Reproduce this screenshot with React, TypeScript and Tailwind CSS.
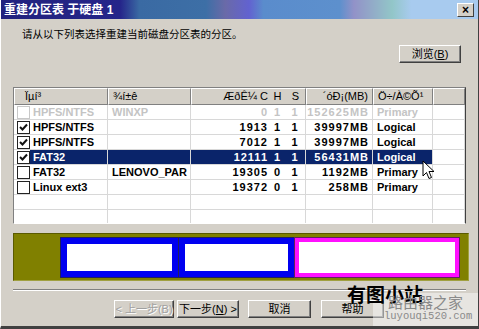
import React from 'react';

type Check = 'on' | 'off' | 'disabled';

interface Row {
  chk: Check;
  fs: string;
  label: string;
  c: string;
  h: string;
  s: string;
  size: string;
  type: string;
  dim?: boolean;
  sel?: boolean;
}

const rows: Row[] = [
  { chk: 'disabled', fs: 'HPFS/NTFS', label: 'WINXP', c: '0', h: '1', s: '1', size: '152625MB', type: 'Primary', dim: true },
  { chk: 'on', fs: 'HPFS/NTFS', label: '', c: '1913', h: '1', s: '1', size: '39997MB', type: 'Logical' },
  { chk: 'on', fs: 'HPFS/NTFS', label: '', c: '7012', h: '1', s: '1', size: '39997MB', type: 'Logical' },
  { chk: 'on', fs: 'FAT32', label: '', c: '12111', h: '1', s: '1', size: '56431MB', type: 'Logical', sel: true },
  { chk: 'off', fs: 'FAT32', label: 'LENOVO_PAR', c: '19305', h: '0', s: '1', size: '1192MB', type: 'Primary' },
  { chk: 'off', fs: 'Linux ext3', label: '', c: '19372', h: '0', s: '1', size: '258MB', type: 'Primary' },
];

const CheckBox = ({ state }: { state: Check }) => (
  <div
    className={`w-[13px] h-[13px] shrink-0 border flex items-center justify-center ${
      state === 'disabled' ? 'border-[#c8c8c8] bg-white' : 'border-[#222] bg-white'
    }`}
  >
    {state === 'on' && (
      <svg width="9" height="9" viewBox="0 0 9 9">
        <path d="M1 4 L3.5 6.5 L8 1.5" stroke="#111" strokeWidth="2" fill="none" />
      </svg>
    )}
  </div>
);

const Btn = ({ children, className = '', disabled = false }: { children: React.ReactNode; className?: string; disabled?: boolean }) => (
  <div
    className={`h-[18px] flex items-center justify-center bg-[#d4d0c8] border border-t-white border-l-white border-r-[#404040] border-b-[#404040] shadow-[inset_-1px_-1px_0_#808080] text-[11px] ${
      disabled ? 'text-[#a0a0a0] [text-shadow:1px_1px_0_#fff]' : 'text-black'
    } ${className}`}
  >
    {children}
  </div>
);

const headCell =
  'h-[17px] flex items-center bg-[#d4d0c8] border-t border-l border-t-white border-l-white border-r border-b border-r-[#808080] border-b-[#808080] text-[11px] text-black whitespace-nowrap overflow-hidden';

const cell = 'h-[15px] flex items-center border-r border-b border-[#d8d8d8] text-[11px] font-bold whitespace-nowrap overflow-hidden';

export default function App() {
  return (
    <div
      className="relative w-[479px] h-[329px] overflow-hidden bg-[#d4d0c8] border-l border-l-white border-r border-r-[#404040] border-b-[3px] border-b-[#404040]"
      style={{ fontFamily: '"Liberation Sans", "Noto Sans CJK SC", sans-serif' }}
    >
      {/* title bar */}
      <div className="h-[19px] flex items-center pl-[3px] bg-[linear-gradient(90deg,#22227e_0%,#25258a_25%,#3a6aa3_29%,#3d6fa6_43%,#6a6aa8_47%,#6262d0_52%,#5a8ccc_55%,#5d90cd_71%,#9292c8_74%,#92c6c8_82%,#a8cbef_86%,#a8cbef_100%)]">
        <span className="text-white text-[12px] font-bold leading-none">重建分区表 于硬盘 1</span>
        <div className="ml-auto mr-[4px] w-[17px] h-[14px] bg-[#d4d0c8] border border-t-white border-l-white border-r-[#404040] border-b-[#404040] flex items-center justify-center text-[12px] font-bold leading-none text-black">
          ×
        </div>
      </div>

      <div className="px-[12px]">
        <div className="mt-[8px] pl-[9px] h-[14px] text-[10.5px] leading-[14px] text-black">
          请从以下列表选择重建当前磁盘分区表的分区。
        </div>

        <div className="mt-[4px] flex justify-end">
          <Btn className="w-[62px] mr-[5px]">
            浏览(<span className="underline">B</span>)
          </Btn>
        </div>

        {/* partition list */}
        <div className="mt-[24px] h-[137px] bg-white border border-t-[#808080] border-l-[#808080] border-r-[#404040] border-b-white overflow-hidden">
          <div className="grid grid-cols-[94px_83px_115px_67px_60px_1fr]">
            <div className={`${headCell} pl-[10px]`}>Ïµí³</div>
            <div className={`${headCell} pl-[4px]`}>¾í±ê</div>
            <div className={headCell}>
              <span className="w-[76px] text-right">ÆðÊ¼ C</span>
              <span className="w-[19px] text-center">H</span>
              <span className="w-[17px] text-center">S</span>
            </div>
            <div className={`${headCell} justify-end pr-[4px]`}>´óÐ¡(MB)</div>
            <div className={`${headCell} pl-[4px]`}>Ö÷/À©Õ¹</div>
            <div className={headCell}></div>

            {rows.map((r, i) => {
              const color = r.sel ? 'text-white' : r.dim ? 'text-[#c4c4c4]' : 'text-black';
              const bg = r.sel ? 'bg-[#0a246a]' : '';
              return (
                <React.Fragment key={i}>
                  <div className={`${cell} pl-[3px] ${color}`}>
                    <CheckBox state={r.chk} />
                    <span className={`flex-1 h-full flex items-center pl-[3px] ${bg}`}>{r.fs}</span>
                  </div>
                  <div className={`${cell} pl-[4px] ${color} ${bg}`}>{r.label}</div>
                  <div className={`${cell} ${color} ${bg}`}>
                    <span className="w-[77px] text-right tracking-[1px]">{r.c}</span>
                    <span className="w-[18px] text-center">{r.h}</span>
                    <span className="w-[17px] text-center">{r.s}</span>
                  </div>
                  <div className={`${cell} justify-end pr-[3px] tracking-[1px] ${color} ${bg}`}>{r.size}</div>
                  <div className={`${cell} pl-[4px] ${color} ${bg}`}>{r.type}</div>
                  <div className={cell}></div>
                </React.Fragment>
              );
            })}
            {[0, 1].map((k) =>
              [0, 1, 2, 3, 4, 5].map((j) => <div key={`e${k}-${j}`} className={cell}></div>)
            )}
          </div>
        </div>

        {/* disk map */}
        <div className="mt-[9px] h-[48px] w-[456px] bg-[#808000] border border-t-[#5a5a00] border-l-[#5a5a00] border-r-[#a0a040] border-b-[#a0a040] flex items-start pt-[4px] pl-[47px]">
          <div className="w-[117px] h-[39px] border-[6px] border-[#0000f0] outline outline-1 outline-[#202060] bg-white"></div>
          <div className="ml-[1px] w-[115px] h-[39px] border-[6px] border-[#0000f0] outline outline-1 outline-[#202060] bg-white"></div>
          <div className="ml-[1px] w-[164px] h-[39px] border-[4px] border-[#ff10ff] outline outline-1 outline-[#602060] bg-white"></div>
        </div>

        <div className="mt-[8px] h-[2px] border-t border-t-[#808080] border-b border-b-white"></div>

        <div className="mt-[9px] flex">
          <Btn disabled className="ml-[101px] w-[60px]">
            &lt; 上一步(B)
          </Btn>
          <Btn className="ml-[3px] w-[62px]">
            下一步(<span className="underline">N</span>) &gt;
          </Btn>
          <Btn className="ml-[9px] w-[63px]">取消</Btn>
          <Btn className="ml-[10px] w-[63px]">帮助</Btn>
        </div>
      </div>

      {/* mouse pointer */}
      <svg className="absolute left-[421px] top-[160px]" width="13" height="20" viewBox="0 0 13 20">
        <path d="M1 1 L1 16 L4.5 12.5 L7 18.5 L9.5 17.5 L7 11.5 L12 11.5 Z" fill="#fff" stroke="#000" strokeWidth="1" />
      </svg>

      {/* watermark */}
      <div className="absolute left-[372px] top-[293px] w-[107px] h-[36px] bg-white/45"></div>
      <div className="absolute left-[346px] top-[284px] text-[19px] font-bold leading-none text-black" style={{ fontFamily: '"Noto Sans CJK SC", sans-serif' }}>
        有图小站
      </div>
      <div className="absolute left-[387px] top-[294px] text-[15px] leading-none text-[#8a8a8a]" style={{ fontFamily: '"Noto Sans CJK SC", sans-serif' }}>
        路由器之家
      </div>
      <div className="absolute left-[383px] top-[311px] text-[10.5px] leading-none text-[#8a8a8a]" style={{ fontFamily: '"Liberation Mono", monospace' }}>
        luyouqi520.com
      </div>
    </div>
  );
}
